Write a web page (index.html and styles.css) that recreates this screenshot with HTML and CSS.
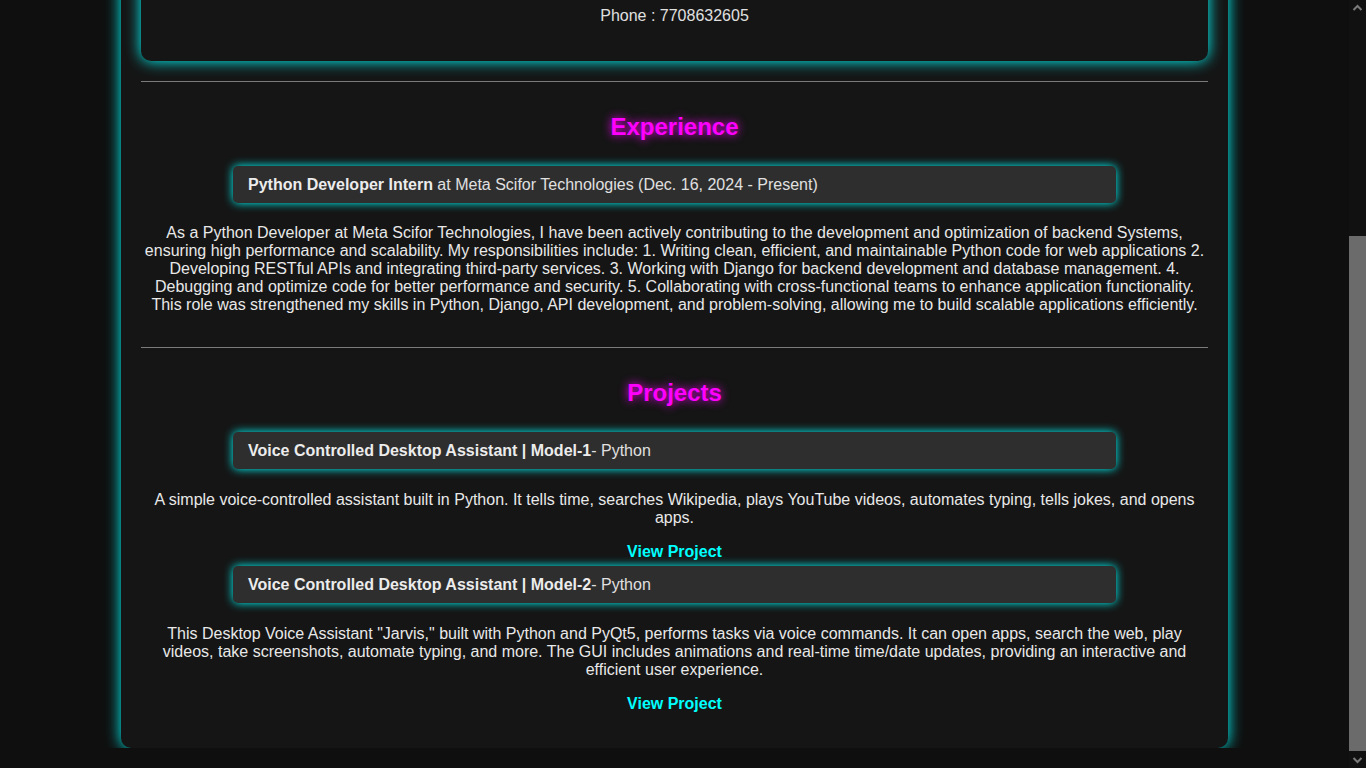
FILE: index.html
```html
<!DOCTYPE html>
<html lang="en">
<head>
<meta charset="utf-8">
<title>Resume</title>
<link rel="stylesheet" href="styles.css">
</head>
<body>
<div class="container">
  <div class="profile-card">
    <svg class="avatar" viewBox="0 0 150 150" width="150" height="150" aria-hidden="true">
      <circle cx="75" cy="75" r="73" fill="#2c2c2c" stroke="#00ffff" stroke-width="2"/>
      <circle cx="75" cy="58" r="26" fill="#555"/>
      <path d="M28 128 C36 96 114 96 122 128 Z" fill="#555"/>
    </svg>
    <h1 class="name">Resume</h1>
    <p class="contact">Python Developer</p>
    <p class="contact">Phone : 7708632605</p>
  </div>

  <hr class="divider">

  <section class="section section-experience">
    <h2 class="section-title">Experience</h2>
    <div class="item-box"><strong>Python Developer Intern</strong> at Meta Scifor Technologies (Dec. 16, 2024 - Present)</div>
    <p class="desc desc-experience">As a Python Developer at Meta Scifor Technologies, I have been actively contributing to the development and optimization of backend Systems, ensuring high performance and scalability. My responsibilities include: 1. Writing clean, efficient, and maintainable Python code for web applications 2. Developing RESTful APIs and integrating third-party services. 3. Working with Django for backend development and database management. 4. Debugging and optimize code for better performance and security. 5. Collaborating with cross-functional teams to enhance application functionality. This role was strengthened my skills in Python, Django, API development, and problem-solving, allowing me to build scalable applications efficiently.</p>
  </section>

  <hr class="divider">

  <section class="section section-projects">
    <h2 class="section-title">Projects</h2>
    <div class="project">
      <div class="item-box"><strong>Voice Controlled Desktop Assistant | Model-1</strong>- Python</div>
      <p class="desc">A simple voice-controlled assistant built in Python. It tells time, searches Wikipedia, plays YouTube videos, automates typing, tells jokes, and opens apps.</p>
      <a class="project-link" href="#">View Project</a>
    </div>
    <div class="project">
      <div class="item-box"><strong>Voice Controlled Desktop Assistant | Model-2</strong>- Python</div>
      <p class="desc">This Desktop Voice Assistant "Jarvis," built with Python and PyQt5, performs tasks via voice commands. It can open apps, search the web, play videos, take screenshots, automate typing, and more. The GUI includes animations and real-time time/date updates, providing an interactive and efficient user experience.</p>
      <a class="project-link" href="#">View Project</a>
    </div>
  </section>
</div>

<div class="fake-scrollbar" aria-hidden="true">
  <svg class="sb-arrow" viewBox="0 0 17 17" width="17" height="17">
    <path d="M4.5 10 L8.5 6 L12.5 10" fill="none" stroke="#7a7a7a" stroke-width="2"/>
  </svg>
  <div class="sb-track"><div class="sb-thumb"></div></div>
  <svg class="sb-arrow" viewBox="0 0 17 17" width="17" height="17">
    <path d="M4.5 7 L8.5 11 L12.5 7" fill="none" stroke="#7a7a7a" stroke-width="2"/>
  </svg>
</div>
<script src="script.js"></script>
</body>
</html>
```
FILE: styles.css
```css
:root {
  color-scheme: dark;
}
html {
  background: #0f0f0f;
}
body {
  margin: 20px 17px 20px 0;
  background: #0f0f0f;
  color: #e0e0e0;
  font-family: "Liberation Sans", Arial, sans-serif;
  font-size: 16px;
}
.container {
  width: 1107px;
  box-sizing: border-box;
  margin: 0 auto;
  padding: 20px;
  background: #151515;
  border-radius: 10px;
  box-shadow: 0 0 15px #00ffff;
  text-align: center;
}
.profile-card {
  padding: 20px;
  border-radius: 10px;
  background: #151515;
  box-shadow: 0 0 15px #00ffff;
}
.avatar {
  display: block;
  margin: 0 auto 10px;
}
.name {
  margin: 10px 0;
  font-size: 32px;
  line-height: 37px;
  color: #ff00ff;
  text-shadow: 0 0 10px #ff00ff;
}
.contact {
  margin: 16px 0;
  line-height: 18px;
}
.divider {
  border: 0;
  height: 1px;
  background: #7a7a7a;
  margin: 20px 0 0;
}
.section-experience {
  padding-bottom: 13px;
}
.section-projects {
  padding-bottom: 15px;
}
.section-title {
  margin: 31px 0 25px;
  font-size: 24px;
  line-height: 28px;
  color: #ff00ff;
  text-shadow: 0 0 10px #ff00ff;
}
.item-box {
  width: 883px;
  box-sizing: border-box;
  margin: 0 auto;
  padding: 9px 15px;
  border-radius: 5px;
  background: #2e2e2e;
  box-shadow: 0 0 10px #00ffff;
  text-align: left;
  line-height: 19px;
  color: #e0e0e0;
}
.item-box strong {
  color: #ececec;
}
.desc {
  margin: 22px 0 0;
  line-height: 18px;
  color: #e8e8e8;
}
.desc-experience {
  margin-top: 21px;
}
.project {
  margin-bottom: 5px;
}
.project:last-child {
  margin-bottom: 0;
}
.project-link {
  display: inline-block;
  margin-top: 16px;
  line-height: 18px;
  font-weight: bold;
  color: #00ffff;
  text-decoration: none;
}
.fake-scrollbar {
  position: fixed;
  top: 0;
  right: 0;
  width: 17px;
  height: 100vh;
  display: flex;
  flex-direction: column;
  background: #111111;
}
.sb-arrow {
  display: block;
  flex: none;
}
.sb-track {
  flex: 1;
  display: flex;
  flex-direction: column;
  justify-content: flex-end;
}
.sb-thumb {
  height: 515px;
  background: #6b6b6b;
}
```
FILE: script.js
```js
window.scrollTo(0, document.documentElement.scrollHeight);
window.addEventListener('load', function () {
  window.scrollTo(0, document.documentElement.scrollHeight);
});
```
